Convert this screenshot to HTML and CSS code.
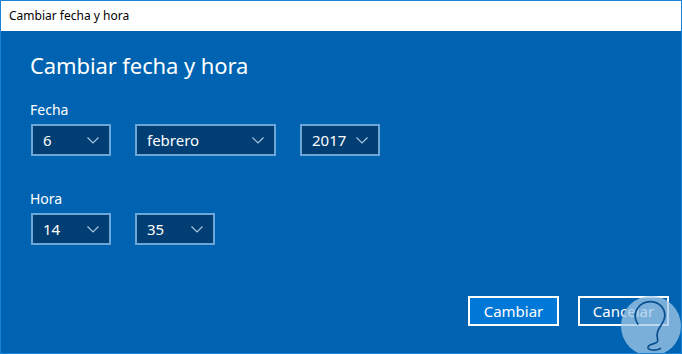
FILE: index.html
```html
<!DOCTYPE html>
<html lang="es">
<head>
  <meta charset="UTF-8" />
  <title>Cambiar fecha y hora</title>
  <link rel="stylesheet" href="styles.css">
</head>
<body>
  <div class="window">
    <div class="titlebar">Cambiar fecha y hora</div>
    <div class="content">
      <h1>Cambiar fecha y hora</h1>

      <div class="label">Fecha</div>
      <div class="row">
        <div class="select"><span>6</span><svg viewBox="0 0 12 7"><path d="M0.5 0.5 L6 6 L11.5 0.5" /></svg></div>
        <div class="select wide"><span>febrero</span><svg viewBox="0 0 12 7"><path d="M0.5 0.5 L6 6 L11.5 0.5" /></svg></div>
        <div class="select"><span>2017</span><svg viewBox="0 0 12 7"><path d="M0.5 0.5 L6 6 L11.5 0.5" /></svg></div>
      </div>

      <div class="label hora">Hora</div>
      <div class="row">
        <div class="select"><span>14</span><svg viewBox="0 0 12 7"><path d="M0.5 0.5 L6 6 L11.5 0.5" /></svg></div>
        <div class="select"><span>35</span><svg viewBox="0 0 12 7"><path d="M0.5 0.5 L6 6 L11.5 0.5" /></svg></div>
      </div>

      <div class="buttons">
        <button class="btn primary">Cambiar</button>
        <button class="btn">Cancelar</button>
      </div>
    </div>

    <!-- marca de agua -->
    <svg class="watermark" viewBox="0 0 64 64">
      <circle cx="32" cy="32" r="32" fill="#a3c8e8" fill-opacity="0.75" />
      <path d="M18 30 C10 18 20 5 33 6 C46 8 50 20 44 29 C40 35 37 40 39 46 C41 52 31 50 29 54 C27 58 37 59 42 56"
            fill="none" stroke="#0a4f8f" stroke-width="1.8" stroke-linecap="round" />
    </svg>
  </div>
</body>
</html>
```

FILE: styles.css
```css
:root {
  --frame: #1883d7;
  --body-blue: #0063b1;
  --select-bg: #003e73;
  --select-border: #6fa6d8;
  --chevron: #a9c6e3;
  --button-blue: #0078d7;
  --font-family: 'Noto Sans', 'Open Sans', sans-serif;
}

* {
  box-sizing: border-box;
  margin: 0;
  padding: 0;
}

html, body {
  width: 682px;
  height: 354px;
  overflow: hidden;
  font-family: var(--font-family);
}

.window {
  position: relative;
  width: 682px;
  height: 354px;
  border: 1px solid var(--frame);
  background-color: var(--body-blue);
  display: flex;
  flex-direction: column;
  overflow: hidden;
}

.titlebar {
  height: 30px;
  background: #ffffff;
  color: #000000;
  font-size: 12px;
  line-height: 30px;
  padding-left: 8px;
}

.content {
  flex: 1;
  display: flex;
  flex-direction: column;
  padding: 18px 12px 0 29px;
  color: #ffffff;
}

h1 {
  font-weight: 400;
  font-size: 22px;
  line-height: 32px;
  letter-spacing: -0.1px;
}

.label {
  font-size: 14px;
  line-height: 20px;
  margin-top: 19px;
  margin-bottom: 4px;
}

.label.hora {
  margin-top: 33px;
  margin-bottom: 4px;
}

.row {
  display: flex;
  gap: 24px;
  padding-left: 1px;
}

.select {
  width: 80px;
  height: 32px;
  border: 2px solid var(--select-border);
  background: var(--select-bg);
  display: flex;
  align-items: center;
  justify-content: space-between;
  padding: 0 10px 0 10px;
  font-size: 15px;
}

.select.wide {
  width: 141px;
}

.select svg {
  width: 12px;
  height: 7px;
  margin-top: 1px;
}

.select svg path {
  fill: none;
  stroke: var(--chevron);
  stroke-width: 1.2;
}

.buttons {
  margin-top: auto;
  margin-bottom: 27px;
  display: flex;
  justify-content: flex-end;
  gap: 19px;
}

.btn {
  height: 30px;
  width: 91px;
  border: 2px solid #ffffff;
  background: transparent;
  color: #ffffff;
  font-family: var(--font-family);
  font-size: 15px;
}

.btn.primary {
  background: var(--button-blue);
}

.watermark {
  position: absolute;
  right: 0;
  bottom: -4px;
  width: 60px;
  height: 62px;
}
```
